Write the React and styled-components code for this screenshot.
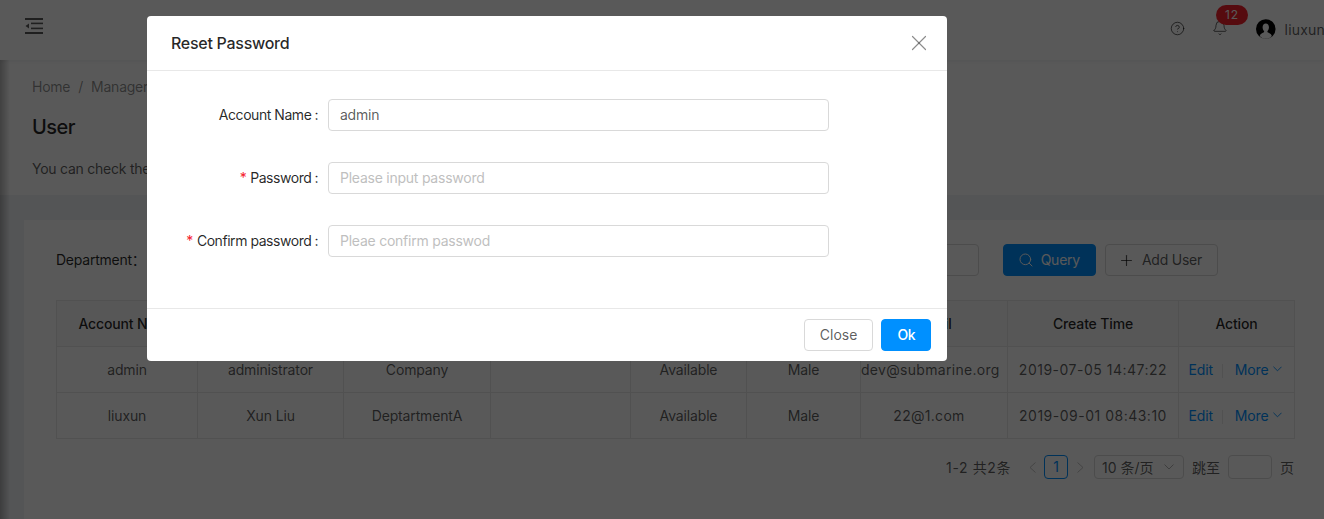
import React from 'react';
import styled, { createGlobalStyle } from 'styled-components';
import { Search, Plus, X, Bell, CircleHelp } from 'lucide-react';

const GlobalStyle = createGlobalStyle`
  html, body {
    margin: 0;
    padding: 0;
    height: 100%;
    overflow: hidden;
    background: #f0f2f5;
    font-family: Inter, "Noto Sans CJK SC", "Liberation Sans", sans-serif;
    font-size: 14px;
    letter-spacing: -0.24px;
    color: rgba(0, 0, 0, 0.65);
  }
  * { box-sizing: border-box; }
`

const Page = styled.div`
  width: 1324px;
  height: 519px;
  overflow: hidden;
  position: relative;
`

const Header = styled.header`
  height: 60px;
  background: #fff;
  display: flex;
  align-items: center;
  padding: 0 0 8px 25px;
  box-shadow: 0 1px 4px rgba(0, 21, 41, 0.08);
  position: relative;
`

const HeaderRight = styled.div`
  margin: 6px -1px 0 auto;
  display: flex;
  align-items: center;
  width: 156px;
  flex: none;
`

const HelpIcon = styled(CircleHelp)`
  margin: -2px 0 0 1px;
  flex: none;
`

const BellBox = styled.span`
  position: relative;
  display: flex;
  margin: -2px 28px 0 27px;
`

const Badge = styled.span`
  position: absolute;
  left: 4px;
  top: -15px;
  width: 32px;
  height: 20px;
  border-radius: 10px;
  background: #f5222d;
  color: #fff;
  font-size: 12px;
  letter-spacing: 1px;
  line-height: 20px;
  text-align: center;
`

const UserName = styled.span`
  margin-left: 9px;
  white-space: nowrap;
  letter-spacing: 0.2px;
`

const PageTop = styled.section`
  background: #fff;
  height: 135px;
  padding: 16px 32px 0;
`

const Crumbs = styled.div`
  display: flex;
  gap: 8px;
  line-height: 22px;
  color: rgba(0, 0, 0, 0.45);
`

const Title = styled.h1`
  margin: 15px 0 0;
  font-size: 20px;
  font-weight: 500;
  letter-spacing: -0.5px;
  line-height: 28px;
  color: rgba(0, 0, 0, 0.85);
`

const Desc = styled.p`
  margin: 17px 0 0;
  line-height: 22px;
`

const Card = styled.section`
  margin: 25px 0 0 24px;
  width: 1302px;
  height: 400px;
  background: #fff;
  padding: 24px 32px;
`

const FilterRow = styled.div`
  display: flex;
  align-items: center;
  height: 32px;
`

const FilterLabel = styled.span`
  color: rgba(0, 0, 0, 0.85);
  padding-bottom: 2px;
`

const FilterInput = styled.div`
  margin-left: auto;
  width: 120px;
  height: 32px;
  border: 1px solid #d9d9d9;
  border-radius: 4px;
  margin-right: 24px;
`

const ToolButton = styled.button`
  height: 32px;
  padding: ${p => p.$primary ? '0 15px 2px 14px' : '0 15px 2px 12px'};
  margin-right: ${p => p.$primary ? '9px' : '76px'};
  display: inline-flex;
  align-items: center;
  gap: 7px;
  font: inherit;
  letter-spacing: inherit;
  border-radius: 4px;
  border: 1px solid ${p => p.$primary ? '#0090ff' : '#d9d9d9'};
  background: ${p => p.$primary ? '#0090ff' : '#fff'};
  color: ${p => p.$primary ? '#fff' : 'rgba(0, 0, 0, 0.65)'};
  svg {
    margin-top: 2px;
  }
`

const Table = styled.table`
  margin-top: 24px;
  width: 1238px;
  table-layout: fixed;
  border-collapse: collapse;
  border: 1px solid #e8e8e8;
  letter-spacing: -0.15px;
`

const HeadCell = styled.th`
  height: 46px;
  padding: 0;
  border: 1px solid #e8e8e8;
  background: #fafafa;
  font-weight: 500;
  text-align: center;
  color: rgba(0, 0, 0, 0.85);
  white-space: nowrap;
`

const Cell = styled.td`
  height: 46px;
  padding: 0 ${p => p.$pullLeft || 0}px 0 0;
  border: 1px solid #e8e8e8;
  text-align: center;
  white-space: nowrap;
  letter-spacing: ${p => p.$spacing || 'inherit'};
`

const ActionLink = styled.a`
  color: #0090ff;
  display: inline-flex;
  align-items: center;
  gap: 4px;
`

const Divider = styled.i`
  display: inline-block;
  width: 1px;
  height: 14px;
  background: #e8e8e8;
  margin: 0 12px 0 9px;
  vertical-align: middle;
`

const Pager = styled.div`
  display: flex;
  align-items: center;
  justify-content: flex-end;
  margin-top: 16px;
  width: 1238px;
  height: 24px;
  letter-spacing: 0;
`

const PageTotal = styled.span`
  letter-spacing: 0.6px;
  margin-right: 18px;
`

const PageNum = styled.span`
  width: 24px;
  height: 24px;
  border: 1px solid #0090ff;
  border-radius: 4px;
  color: #0090ff;
  line-height: 22px;
  text-align: center;
  margin: 0 9px 0 8px;
`

const SizeSelect = styled.span`
  width: 90px;
  height: 24px;
  margin-left: 10px;
  padding: 0 9px 0 7px;
  border: 1px solid #d9d9d9;
  border-radius: 4px;
  display: flex;
  align-items: center;
  justify-content: space-between;
`

const JumpLabel = styled.span`
  margin-left: 8px;
`

const JumpInput = styled.span`
  width: 44px;
  height: 24px;
  margin: 0 8px;
  border: 1px solid #d9d9d9;
  border-radius: 4px;
`

const Mask = styled.div`
  position: absolute;
  inset: 0;
  background: rgba(0, 0, 0, 0.65);
`

const SideShadow = styled.div`
  position: absolute;
  left: 0;
  top: 60px;
  bottom: 0;
  width: 10px;
  background: linear-gradient(to right, rgba(0, 0, 0, 0.28), rgba(0, 0, 0, 0));
`

const Modal = styled.div`
  position: absolute;
  left: 147px;
  top: 16px;
  width: 800px;
  height: 345px;
  background: #fff;
  border-radius: 4px;
  display: flex;
  flex-direction: column;
`

const ModalHeader = styled.div`
  height: 55px;
  flex: none;
  padding: 0 15px 0 24px;
  border-bottom: 1px solid #e8e8e8;
  display: flex;
  align-items: center;
  justify-content: space-between;
`

const ModalTitle = styled.div`
  font-size: 16px;
  font-weight: 500;
  letter-spacing: -0.28px;
  color: rgba(0, 0, 0, 0.85);
`

const ModalBody = styled.div`
  flex: 1;
  padding-top: 28px;
  display: flex;
  flex-direction: column;
  gap: 31px;
`

const FormRow = styled.div`
  display: flex;
  align-items: center;
  height: 32px;
`

const FormLabel = styled.label`
  width: 181px;
  flex: none;
  padding-bottom: 2px;
  text-align: right;
  letter-spacing: -0.45px;
  color: rgba(0, 0, 0, 0.85);
  white-space: nowrap;
`

const Star = styled.span`
  color: #f5222d;
  margin-right: 4px;
`

const Colon = styled.span`
  margin: 0 10px 0 3px;
`

const FormInput = styled.input`
  width: 501px;
  height: 32px;
  padding: 0 11px 2px;
  border: 1px solid #d9d9d9;
  border-radius: 4px;
  font: inherit;
  letter-spacing: inherit;
  color: rgba(0, 0, 0, 0.65);
  outline: none;
  &::placeholder {
    color: #bfbfbf;
  }
`

const ModalFooter = styled.div`
  height: 53px;
  flex: none;
  padding: 0 16px;
  border-top: 1px solid #e8e8e8;
  display: flex;
  align-items: center;
  justify-content: flex-end;
  gap: 8px;
`

const FooterButton = styled.button`
  height: 32px;
  padding: 0 15px 2px;
  font: inherit;
  font-weight: ${p => p.$primary ? 500 : 400};
  letter-spacing: ${p => p.$primary ? '-0.5px' : '0'};
  border-radius: 4px;
  border: 1px solid ${p => p.$primary ? '#0090ff' : '#d9d9d9'};
  background: ${p => p.$primary ? '#0090ff' : '#fff'};
  color: ${p => p.$primary ? '#fff' : 'rgba(0, 0, 0, 0.65)'};
`

const columns = [
  ['Account Name', 141], ['User Name', 146], ['Department', 147], ['Role', 140],
  ['Status', 116], ['Sex', 114], ['Email', 147], ['Create Time', 171], ['Action', 116],
]

const rows = [
  ['admin', 'administrator', 'Company', '', 'Available', 'Male', 'dev@submarine.org', '2019-07-05 14:47:22'],
  ['liuxun', 'Xun Liu', 'DeptartmentA', '', 'Available', 'Male', '22@1.com', '2019-09-01 08:43:10'],
]

const fields = [
  { label: 'Account Name', value: 'admin' },
  { label: 'Password', required: true, placeholder: 'Please input password' },
  { label: 'Confirm password', required: true, placeholder: 'Pleae confirm passwod' },
]

function MenuIcon() {
  return (
    <svg width="18" height="16" viewBox="0 0 18 16" fill="currentColor">
      <rect x="0" y="0" width="18" height="2" />
      <rect x="6" y="4.600" width="12" height="1.600" />
      <rect x="6" y="9.600" width="12" height="1.600" />
      <rect x="0" y="14" width="18" height="2" />
      <path d="M0.500 8 L4 5.400 V10.600 Z" />
    </svg>
  )
}

function Avatar() {
  return (
    <svg width="24" height="24" viewBox="0 0 24 24">
      <circle cx="12" cy="12" r="12" fill="#000" />
      <path d="M4.600 20.500c1-3 3.600-3.400 5.200-4.400.4-.6.3-1.200 0-1.700-1.100-1-1.700-2.700-1.700-4.500C8.100 7.300 9.700 5.400 12 5.400s3.900 1.900 3.900 4.500c0 1.800-.6 3.500-1.700 4.500-.3.5-.4 1.100 0 1.700 1.600 1 4.200 1.400 5.200 4.400C17.500 22.900 15 24 12 24s-5.500-1.100-7.400-3.500z" fill="#fff" />
    </svg>
  )
}

// thin antd style carets, the lucide ones are too narrow
function CaretDown({ width = 9, opacity = 1 }) {
  return (
    <svg width={width} height="6" viewBox="0 0 10 6" fill="none" stroke="currentColor" strokeWidth="1" opacity={opacity}>
      <polyline points="0.500,0.500 5,5 9.500,0.500" />
    </svg>
  )
}

function CaretSide({ left }) {
  return (
    <svg width="7" height="11" viewBox="0 0 7 11" fill="none" stroke="currentColor" strokeWidth="1" opacity="0.35">
      <polyline points={left ? '6.500,0.500 1,5.500 6.500,10.500' : '0.500,0.500 6,5.500 0.500,10.500'} />
    </svg>
  )
}

export default function App() {
  return (
    <Page>
      <GlobalStyle />
      <Header>
        <MenuIcon />
        <HeaderRight>
          <HelpIcon size={15} strokeWidth={1.5} />
          <BellBox>
            <Bell size={16} strokeWidth={1.4} />
            <Badge>12</Badge>
          </BellBox>
          <Avatar />
          <UserName>liuxun</UserName>
        </HeaderRight>
      </Header>
      <PageTop>
        <Crumbs>
          <span>Home</span><span>/</span><span>Manager</span><span>/</span><span>User</span>
        </Crumbs>
        <Title>User</Title>
        <Desc>You can check the system users, delete, edit, and add new users.</Desc>
      </PageTop>
      <Card>
        <FilterRow>
          <FilterLabel>Department：</FilterLabel>
          <FilterInput />
          <ToolButton $primary><Search size={16} strokeWidth={1.5} />Query</ToolButton>
          <ToolButton><Plus size={17} strokeWidth={1.6} />Add User</ToolButton>
        </FilterRow>
        <Table>
          <colgroup>
            {columns.map(([name, w]) => <col key={name} width={w} />)}
          </colgroup>
          <thead>
            <tr>{columns.map(([name]) => <HeadCell key={name}>{name}</HeadCell>)}</tr>
          </thead>
          <tbody>
            {rows.map(row => (
              <tr key={row[0]}>
                {row.map((v, i) => (
                  <Cell
                    key={i}
                    $spacing={i === 7 ? '0.5px' : i === 6 ? '0.3px' : undefined}
                    $pullLeft={i === 6 ? 10 : 0}
                  >
                    {v}
                  </Cell>
                ))}
                <Cell $pullLeft={3}>
                  <ActionLink>Edit</ActionLink>
                  <Divider />
                  <ActionLink>More <CaretDown /></ActionLink>
                </Cell>
              </tr>
            ))}
          </tbody>
        </Table>
        <Pager>
          <PageTotal>1-2 共2条</PageTotal>
          <CaretSide left />
          <PageNum>1</PageNum>
          <CaretSide />
          <SizeSelect>10 条/页<CaretDown width={10} opacity={0.45} /></SizeSelect>
          <JumpLabel>跳至</JumpLabel>
          <JumpInput />
          <span>页</span>
        </Pager>
      </Card>
      <SideShadow />
      <Mask />
      <Modal>
        <ModalHeader>
          <ModalTitle>Reset Password</ModalTitle>
          <X size={26} color="rgba(0,0,0,0.45)" strokeWidth={1.1} />
        </ModalHeader>
        <ModalBody>
          {fields.map(f => (
            <FormRow key={f.label}>
              <FormLabel>
                {f.required && <Star>*</Star>}
                {f.label}
                <Colon>:</Colon>
              </FormLabel>
              <FormInput defaultValue={f.value} placeholder={f.placeholder} />
            </FormRow>
          ))}
        </ModalBody>
        <ModalFooter>
          <FooterButton>Close</FooterButton>
          <FooterButton $primary>Ok</FooterButton>
        </ModalFooter>
      </Modal>
    </Page>
  )
}
